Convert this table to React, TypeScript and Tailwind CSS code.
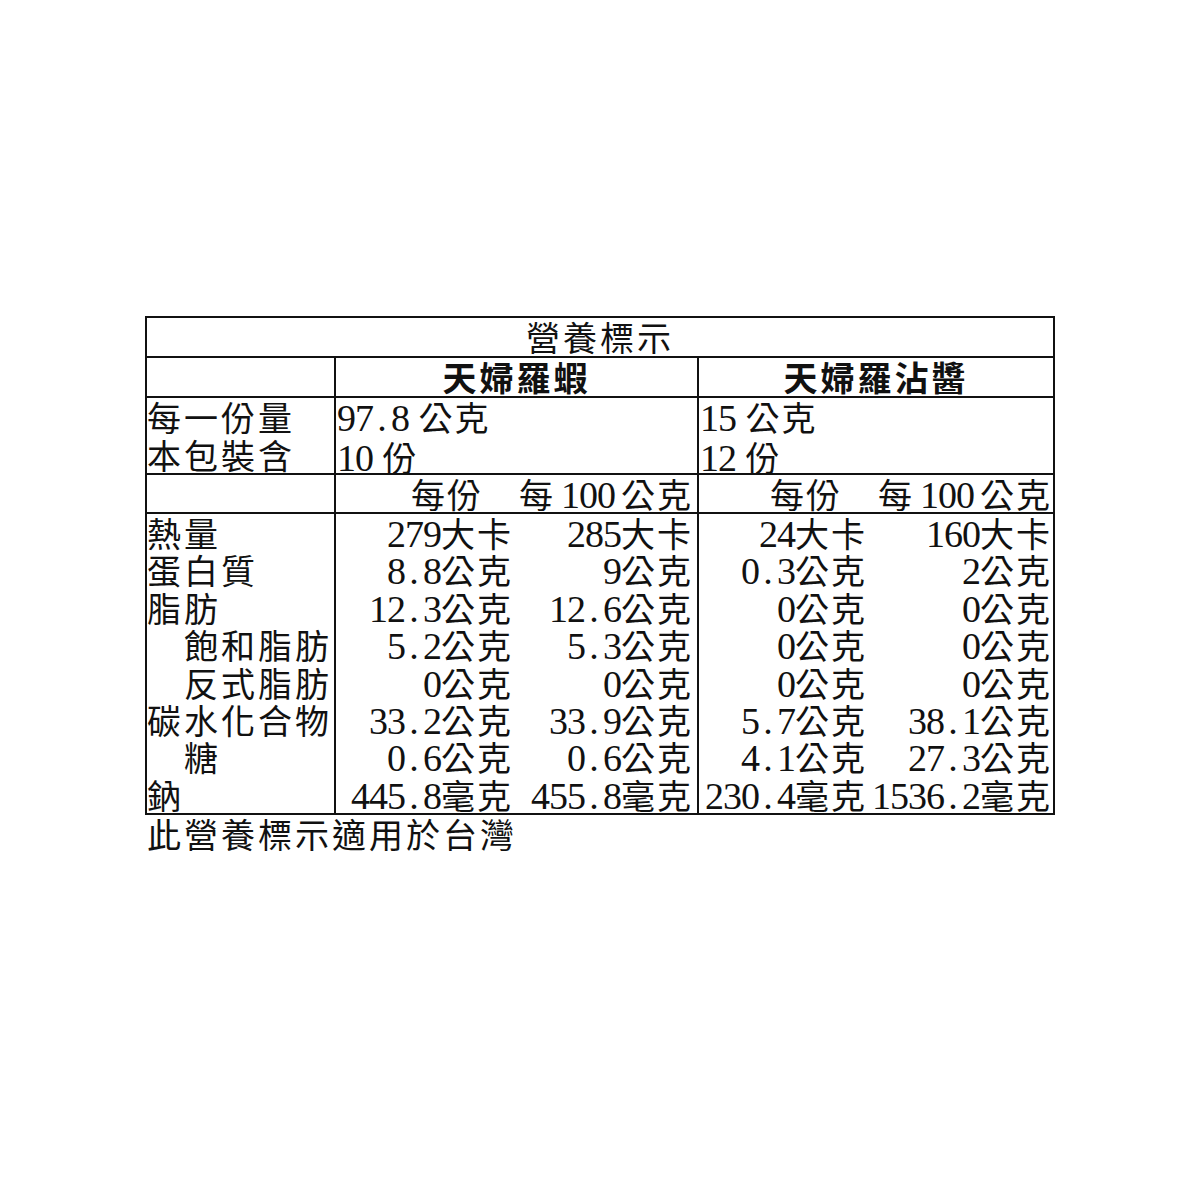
import React from 'react';

// fonts: Ming-style label faces are not installed, so CJK falls back to Noto Sans CJK TC
const CJK = "font-['Noto_Sans_CJK_TC','Noto_Sans_CJK_JP',sans-serif]";
const SERIF = "font-['Liberation_Serif','Noto_Sans_CJK_TC',serif]";
const LINE = 'border-[#111]';

type Cell = [string, string];

interface Row {
  label: string;
  indent?: boolean;
  values: Cell[]; // per serving, per 100g, per serving, per 100g
}

const rows: Row[] = [
  { label: '熱量', values: [['279', '大卡'], ['285', '大卡'], ['24', '大卡'], ['160', '大卡']] },
  { label: '蛋白質', values: [['8.8', '公克'], ['9', '公克'], ['0.3', '公克'], ['2', '公克']] },
  { label: '脂肪', values: [['12.3', '公克'], ['12.6', '公克'], ['0', '公克'], ['0', '公克']] },
  { label: '飽和脂肪', indent: true, values: [['5.2', '公克'], ['5.3', '公克'], ['0', '公克'], ['0', '公克']] },
  { label: '反式脂肪', indent: true, values: [['0', '公克'], ['0', '公克'], ['0', '公克'], ['0', '公克']] },
  { label: '碳水化合物', values: [['33.2', '公克'], ['33.9', '公克'], ['5.7', '公克'], ['38.1', '公克']] },
  { label: '糖', indent: true, values: [['0.6', '公克'], ['0.6', '公克'], ['4.1', '公克'], ['27.3', '公克']] },
  { label: '鈉', values: [['445.8', '毫克'], ['455.8', '毫克'], ['230.4', '毫克'], ['1536.2', '毫克']] },
];

// half-width digits, the dot gets a full digit cell like the original label font
function Num({ v }: { v: string }) {
  return (
    <span className={`${SERIF} text-[38px] tracking-[-1px]`}>
      {v.split('').map((ch, i) =>
        ch === '.' ? (
          <span key={i} className="inline-block w-[18px] text-center tracking-normal">.</span>
        ) : (
          <span key={i}>{ch}</span>
        )
      )}
    </span>
  );
}

function Val({ cell }: { cell: Cell }) {
  return (
    <div className="text-right whitespace-nowrap">
      <Num v={cell[0]} />
      <span className="tracking-[2px]">{cell[1]}</span>
    </div>
  );
}

function Serving({ amount, unit }: { amount: string; unit: string }) {
  return (
    <div className="whitespace-nowrap">
      <Num v={amount} />
      <span className={`${SERIF} text-[38px]`}> </span>
      <span className="tracking-[2px]">{unit}</span>
    </div>
  );
}

function PerHeader() {
  return (
    <div className="flex justify-end items-baseline whitespace-nowrap">
      <span className="tracking-[2px]">每份</span>
      <span className="ml-[36px] tracking-[2px]">每</span>
      <span className={`${SERIF} text-[38px] tracking-[-1px] ml-[6px] mr-[6px]`}>100</span>
      <span className="tracking-[2px]">公克</span>
    </div>
  );
}

export default function App() {
  return (
    <div className={`min-h-[1200px] bg-white pt-[316px] pl-[145px] text-[#111] ${CJK} text-[34px]`}>
      <div className={`w-[910px] border-2 ${LINE}`}>
        {/* title */}
        <div className={`h-[40px] border-b-2 ${LINE} text-center leading-[38px] tracking-[3px]`}>
          營養標示
        </div>

        {/* product names */}
        <div className={`grid grid-cols-[189px_363px_1fr] h-[40px] border-b-2 ${LINE} leading-[38px]`}>
          <div className={`border-r-2 ${LINE}`} />
          <div className={`border-r-2 ${LINE} text-center font-bold tracking-[3px]`}>天婦羅蝦</div>
          <div className="text-center font-bold tracking-[3px]">天婦羅沾醬</div>
        </div>

        {/* serving size */}
        <div className={`grid grid-cols-[189px_363px_1fr] h-[77px] border-b-2 ${LINE} leading-[37.5px]`}>
          <div className={`border-r-2 ${LINE} tracking-[3px]`}>
            <div>每一份量</div>
            <div>本包裝含</div>
          </div>
          <div className={`border-r-2 ${LINE} pl-[1px]`}>
            <Serving amount="97.8" unit="公克" />
            <Serving amount="10" unit="份" />
          </div>
          <div className="pl-[1px]">
            <Serving amount="15" unit="公克" />
            <Serving amount="12" unit="份" />
          </div>
        </div>

        {/* column headers */}
        <div className={`grid grid-cols-[189px_363px_1fr] h-[39px] border-b-2 ${LINE} leading-[37px]`}>
          <div className={`border-r-2 ${LINE}`} />
          <div className={`border-r-2 ${LINE} pr-[4px]`}>
            <PerHeader />
          </div>
          <div className="pr-[1px]">
            <PerHeader />
          </div>
        </div>

        {/* nutrients */}
        {rows.map((row) => (
          <div key={row.label} className="grid grid-cols-[189px_363px_1fr] h-[37.4px] leading-[37.4px]">
            <div className={`border-r-2 ${LINE} tracking-[3px] whitespace-nowrap ${row.indent ? 'pl-[37px]' : ''}`}>
              {row.label}
            </div>
            <div className={`grid grid-cols-[177px_1fr] border-r-2 ${LINE} pr-[4px]`}>
              <Val cell={row.values[0]} />
              <Val cell={row.values[1]} />
            </div>
            <div className="grid grid-cols-[168px_1fr] pr-[1px]">
              <Val cell={row.values[2]} />
              <Val cell={row.values[3]} />
            </div>
          </div>
        ))}
      </div>

      <div className="pl-[2px] leading-[37.4px] tracking-[3px]">此營養標示適用於台灣</div>
    </div>
  );
}
